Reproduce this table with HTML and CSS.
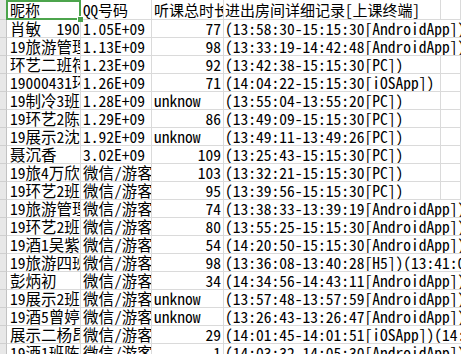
FILE: index.html
```html
<!DOCTYPE html>
<html lang="zh-CN">
<head>
<meta charset="utf-8">
<title>Sheet</title>
<link rel="stylesheet" href="styles.css">
</head>
<body>
<div class="sheet">
  <div class="row head">
    <div class="gut"></div><div>昵称</div><div>QQ号码</div><div>听课总时长</div><div>进出房间详细记录[上课终端]</div><div></div>
  </div>
  <div class="row"><div class="gut"></div><div>肖敏  19004310</div><div>1.05E+09</div><div class="num">77</div><div class="wide">(13:58:30-15:15:30[AndroidApp])</div></div>
  <div class="row"><div class="gut"></div><div>19旅游管理1班</div><div>1.13E+09</div><div class="num">98</div><div class="wide">(13:33:19-14:42:48[AndroidApp])</div></div>
  <div class="row"><div class="gut"></div><div>环艺二班符雅</div><div>1.23E+09</div><div class="num">92</div><div>(13:42:38-15:15:30[PC])</div><div></div></div>
  <div class="row"><div class="gut"></div><div>19000431环艺</div><div>1.26E+09</div><div class="num">71</div><div>(14:04:22-15:15:30[iOSApp])</div><div></div></div>
  <div class="row"><div class="gut"></div><div>19制冷3班李</div><div>1.28E+09</div><div>unknow</div><div>(13:55:04-13:55:20[PC])</div><div></div></div>
  <div class="row"><div class="gut"></div><div>19环艺2陈丽</div><div>1.29E+09</div><div class="num">86</div><div>(13:49:09-15:15:30[PC])</div><div></div></div>
  <div class="row"><div class="gut"></div><div>19展示2沈佳</div><div>1.92E+09</div><div>unknow</div><div>(13:49:11-13:49:26[PC])</div><div></div></div>
  <div class="row"><div class="gut"></div><div>聂沉香</div><div>3.02E+09</div><div class="num">109</div><div>(13:25:43-15:15:30[PC])</div><div></div></div>
  <div class="row"><div class="gut"></div><div>19旅4万欣怡</div><div>微信/游客</div><div class="num">103</div><div>(13:32:21-15:15:30[PC])</div><div></div></div>
  <div class="row"><div class="gut"></div><div>19环艺2班王</div><div>微信/游客</div><div class="num">95</div><div>(13:39:56-15:15:30[PC])</div><div></div></div>
  <div class="row"><div class="gut"></div><div>19旅游管理2班</div><div>微信/游客</div><div class="num">74</div><div class="wide">(13:38:33-13:39:19[AndroidApp])</div></div>
  <div class="row"><div class="gut"></div><div>19环艺2班刘</div><div>微信/游客</div><div class="num">80</div><div class="wide">(13:55:25-15:15:30[AndroidApp])</div></div>
  <div class="row"><div class="gut"></div><div>19酒1吴紫涵</div><div>微信/游客</div><div class="num">54</div><div class="wide">(14:20:50-15:15:30[AndroidApp])</div></div>
  <div class="row"><div class="gut"></div><div>19旅游四班张</div><div>微信/游客</div><div class="num">98</div><div class="wide">(13:36:08-13:40:28[H5])(13:41:02-15:15:30[H5])</div></div>
  <div class="row"><div class="gut"></div><div>彭炳初</div><div>微信/游客</div><div class="num">34</div><div class="wide">(14:34:56-14:43:11[AndroidApp])</div></div>
  <div class="row"><div class="gut"></div><div>19展示2班何</div><div>微信/游客</div><div>unknow</div><div class="wide">(13:57:48-13:57:59[AndroidApp])</div></div>
  <div class="row"><div class="gut"></div><div>19酒5曾婷婷</div><div>微信/游客</div><div>unknow</div><div class="wide">(13:26:43-13:26:47[AndroidApp])</div></div>
  <div class="row"><div class="gut"></div><div>展示二杨昂</div><div>微信/游客</div><div class="num">29</div><div class="wide">(14:01:45-14:01:51[iOSApp])(14:02:10-15:15:30[iOSApp])</div></div>
  <div class="row"><div class="gut"></div><div>19酒1班陈</div><div>微信/游客</div><div class="num">1</div><div class="wide">(14:03:32-14:05:30[AndroidApp])</div></div>
  <div class="sel"><span class="handle"></span></div>
</div>
</body>
</html>
```

FILE: styles.css
```css
html, body {
  margin: 0;
  padding: 0;
  overflow: hidden;
  background: #ffffff;
}

body {
  font-family: "Noto Sans Mono CJK SC", "Noto Sans CJK SC", "Liberation Mono", monospace;
  font-size: 15.5px;
  color: #000000;
}

.sheet {
  position: relative;
  width: 461px;
}

.row {
  display: grid;
  grid-template-columns: 7px 74px 71px 72px 217px 1fr;
  height: 18px;
}

.row > div {
  box-sizing: border-box;
  border-right: 1px solid #dadada;
  border-bottom: 1px solid #dadada;
  overflow: hidden;
  white-space: pre;
  padding: 0 2px;
  line-height: 17px;
}

.row > div:nth-child(2) {
  padding-left: 3px;
}

.row > .gut {
  background: #e8e8e8;
  border-right-color: #c3c3c3;
  border-bottom-color: #d0d0d0;
  padding: 0;
}

.row.head {
  height: 20px;
}

.row.head > div {
  line-height: 19px;
  font-size: 15px;
}

.row > .num {
  text-align: right;
}

.row > .wide {
  grid-column: span 2;
  border-right: none;
  padding-left: 1px;
}

.row > div:nth-child(5) {
  padding-left: 1px;
}

.sel {
  position: absolute;
  left: 6px;
  top: 0;
  width: 75px;
  height: 20px;
  box-sizing: border-box;
  border: 2px solid #4ca44c;
}

.handle {
  position: absolute;
  right: -4px;
  bottom: -4px;
  width: 5px;
  height: 5px;
  background: #4ca44c;
  border-top: 1px solid #ffffff;
  border-left: 1px solid #ffffff;
}
```
